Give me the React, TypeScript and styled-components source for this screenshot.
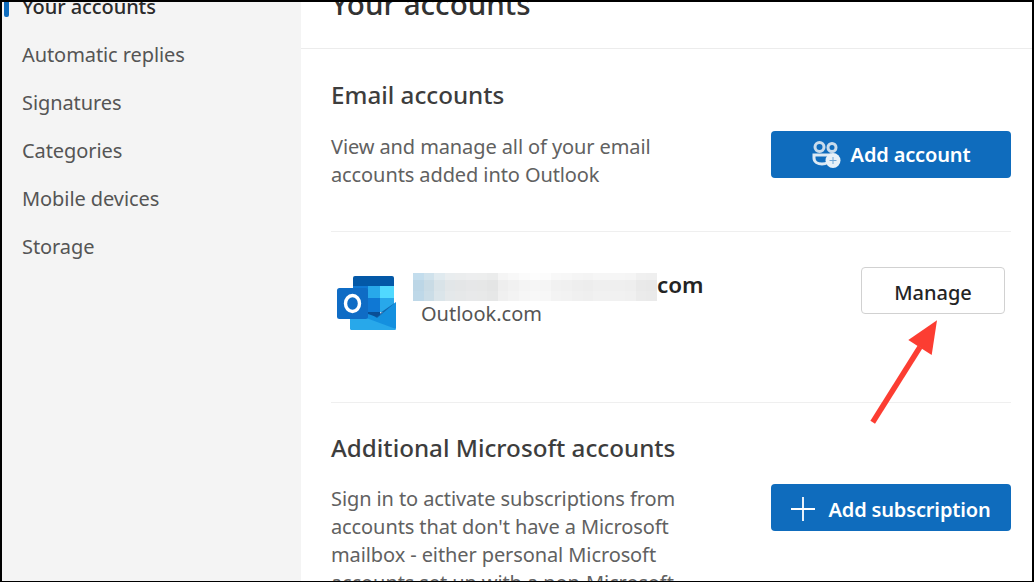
import React from 'react';
import styled, { createGlobalStyle } from 'styled-components';

const Global = createGlobalStyle`
  html, body { margin: 0; padding: 0; overflow: hidden; background: #000; }
  body { font-family: "Noto Sans", "Open Sans", sans-serif; }
  * { box-sizing: border-box; }
`;

const Frame = styled.div`
  width: 1034px; height: 582px; border-style: solid; border-color: #000;
  border-width: 2px 2px 1px 2px; display: flex; overflow: hidden; background: #fff;
`;
const Side = styled.nav`
  width: 299px; flex: none; background: #f4f4f4; padding-left: 20px;
  margin-top: -19px; display: flex; flex-direction: column;
`;
const NavItem = styled.div<{ $active?: boolean }>`
  height: 48px; line-height: 48px; font-size: 20px; letter-spacing: -0.08px;
  font-weight: ${p => p.$active ? 500 : 400};
  color: ${p => p.$active ? '#2b2b2b' : '#555'};
  position: relative;
  ${p => p.$active ? `&::before { content: ''; position: absolute; left: -18px; top: 14px; width: 5px; height: 20px; background: #0f6cbd; border-radius: 2px; }` : ''}
`;
const Main = styled.main`flex: 1; display: flex; flex-direction: column; min-width: 0;`;
const Head = styled.div`
  height: 47px; flex: none; border-bottom: 1px solid #ececec; padding-left: 30px;
  overflow: hidden;
`;
const Title = styled.h1`margin: -16px 0 0; font-size: 29.6px; line-height: 36px; font-weight: 500; color: #333;`;
const Content = styled.div`padding: 0 21px 0 30px; display: flex; flex-direction: column;`;
const H2 = styled.h2`margin: 0; font-size: 24.2px; line-height: 32px; font-weight: 500; color: #3d3d3d;`;
const Row = styled.div`display: flex; justify-content: space-between; align-items: flex-start;`;
const Para = styled.p<{ $top: number }>`
  margin: 0; padding-top: ${p => p.$top}px; font-size: 20px; line-height: 28px; letter-spacing: -0.1px; color: #616161; width: 360px;
`;
const Primary = styled.button<{ $gap: number; $pad: number }>`
  width: 240px; height: 47px; border: none; border-radius: 4px; background: #0f6cbd; color: #fff;
  font: 600 20px "Noto Sans", sans-serif; letter-spacing: -0.15px; display: flex; align-items: center; justify-content: center;
  gap: ${p => p.$gap}px; padding: ${p => p.$pad}px 0 0;
`;
const Section = styled.section<{ $top: number }>`padding-top: ${p => p.$top}px; display: flex; flex-direction: column; gap: 20px;`;
const Divider = styled.div`height: 1px; background: #efefef; margin-top: 42px;`;
const Account = styled.div`display: flex; align-items: flex-start; height: 171px; padding-top: 35px; border-bottom: 1px solid #efefef;`;
const Logo = styled.svg`width: 60px; height: 55px; margin: 9px 0 0 6px; flex: none;`;
const Info = styled.div`margin-left: 16px; padding-top: 6px; flex: 1;`;
const MailLine = styled.div`display: flex; align-items: center; height: 28px;`;
const Mail = styled.span`font-size: 22.4px; font-weight: 600; color: #242424; margin-bottom: 6px;`;
const Provider = styled.div`font-size: 20px; line-height: 28px; color: #555; margin: -1px 0 0 8px;`;
const Manage = styled.button`
  width: 144px; height: 47px; border: 1px solid #d1d1d1; border-radius: 4px; background: #fff; color: #242424;
  font: 500 20px "Noto Sans", sans-serif; margin-right: 6px; padding: 4px 0 0;
`;
const Arrow = styled.svg`position: absolute; left: 868px; top: 320px; width: 72px; height: 110px; pointer-events: none;`;

const columns = [
  [0xbc, 0xd6, 0xe6], [0xc9, 0xdb, 0xe5], [0xd9, 0xe3, 0xe8], [0xe2, 0xe6, 0xe8], [0xe4, 0xe6, 0xe7], [0xe6, 0xe7, 0xe8],
  [0xe6, 0xe7, 0xe7], [0xe4, 0xe5, 0xe5], [0xee, 0xee, 0xee], [0xf1, 0xf1, 0xf1], [0xf4, 0xf4, 0xf4], [0xf6, 0xf6, 0xf6],
  [0xf5, 0xf5, 0xf5], [0xf1, 0xf1, 0xf1], [0xf0, 0xf0, 0xf0], [0xee, 0xee, 0xee], [0xed, 0xed, 0xed], [0xef, 0xef, 0xef],
  [0xef, 0xef, 0xef], [0xef, 0xef, 0xef], [0xee, 0xee, 0xee], [0xe9, 0xe9, 0xe9], [0xe8, 0xe8, 0xe8],
];
const rows = [{ y: 0, h: 7, add: 7 }, { y: 7, h: 11, add: 0 }, { y: 18, h: 10, add: 2 }];

const BlurredName = () => (
  <svg width="244" height="28" viewBox="0 0 244 28" shapeRendering="crispEdges">
    {rows.map(r => columns.map((c, i) => (
      <rect
        key={`${i}-${r.y}`}
        x={i * 10.6}
        y={r.y}
        width="10.8"
        height={r.h}
        fill={`rgb(${c.map(v => Math.min(255, v + r.add)).join(',')})`}
      />
    )))}
  </svg>
);

const Outlook = () => (
  <Logo viewBox="0 0 60 55">
    <path d="M16 2a2 2 0 0 1 2-2h37a2 2 0 0 1 2 2v10H16z" fill="#0358a7" />
    <rect x="16" y="10" width="15" height="12" fill="#0f78d4" />
    <rect x="31" y="10" width="12" height="12" fill="#28a8ea" />
    <rect x="43" y="10" width="14" height="12" fill="#50d9ff" />
    <rect x="16" y="22" width="15" height="14" fill="#0364b8" />
    <rect x="31" y="22" width="12" height="14" fill="#0f78d4" />
    <rect x="43" y="22" width="14" height="14" fill="#28a8ea" />
    <rect x="16" y="36" width="27" height="8" fill="#0a4f96" />
    <path d="M13 32 40 41 59 26v26a2 2 0 0 1-2 2H15a2 2 0 0 1-2-2z" fill="#1490df" />
    <path d="M59 26 40 42 31 36 43 37z" fill="#0a4f96" opacity=".7" />
    <path d="M13 36 59 53a2 2 0 0 1-2 1H15a2 2 0 0 1-2-2z" fill="#28a8ea" />
    <rect x="0" y="12" width="31" height="31" rx="2.5" fill="#0f6cc5" />
    <ellipse cx="15.5" cy="27.5" rx="7" ry="8" fill="none" stroke="#fff" strokeWidth="3.4" />
  </Logo>
);

export default function App() {
  return (
    <Frame>
      <Global />
      <Side>
        <NavItem $active>Your accounts</NavItem>
        <NavItem>Automatic replies</NavItem>
        <NavItem>Signatures</NavItem>
        <NavItem>Categories</NavItem>
        <NavItem>Mobile devices</NavItem>
        <NavItem>Storage</NavItem>
      </Side>
      <Main>
        <Head><Title>Your accounts</Title></Head>
        <Content>
          <Section $top={30}>
            <H2>Email accounts</H2>
            <Row>
              <Para $top={2}>View and manage all of your email accounts added into Outlook</Para>
              <Primary $gap={10} $pad={0}>
                <svg width="29" height="27" viewBox="0 0 29 27" fill="none">
                  <circle cx="7.5" cy="6" r="4.5" stroke="#c9dcec" strokeWidth="3"/>
                  <circle cx="20" cy="6.5" r="4" stroke="#c9dcec" strokeWidth="3"/>
                  <path d="M2 14h16v3c0 4-4 6-8 6s-8-2-8-6z" stroke="#dce9f4" strokeWidth="3"/>
                  <circle cx="21" cy="19.5" r="7.5" fill="#e8f1f8"/>
                  <path d="M21 16v7M17.5 19.5h7" stroke="#6ea6d6" strokeWidth="1"/>
                </svg>
                Add account
              </Primary>
            </Row>
          </Section>
          <Divider />
          <Account>
            <Outlook />
            <Info>
              <MailLine>
                <BlurredName />
                <Mail>com</Mail>
              </MailLine>
              <Provider>Outlook.com</Provider>
            </Info>
            <Manage>Manage</Manage>
          </Account>
          <Section $top={29}>
            <H2>Additional Microsoft accounts</H2>
            <Row>
              <Para $top={1}>Sign in to activate subscriptions from accounts that don't have a Microsoft mailbox - either personal Microsoft accounts set up with a non-Microsoft</Para>
              <Primary $gap={13} $pad={3}>
                <svg width="24" height="24" viewBox="0 0 24 24"><path d="M12 0v24M0 12h24" stroke="#fff" strokeWidth="1.8"/></svg>
                Add subscription
              </Primary>
            </Row>
          </Section>
        </Content>
      </Main>
      <Arrow viewBox="0 0 72 110">
        <path d="M4.7 102.3L52 27" stroke="#fc3d32" strokeWidth="5.5"/>
        <path d="M69 .3L40.3 20 63.7 35z" fill="#fc3d32"/>
      </Arrow>
    </Frame>
  );
}
